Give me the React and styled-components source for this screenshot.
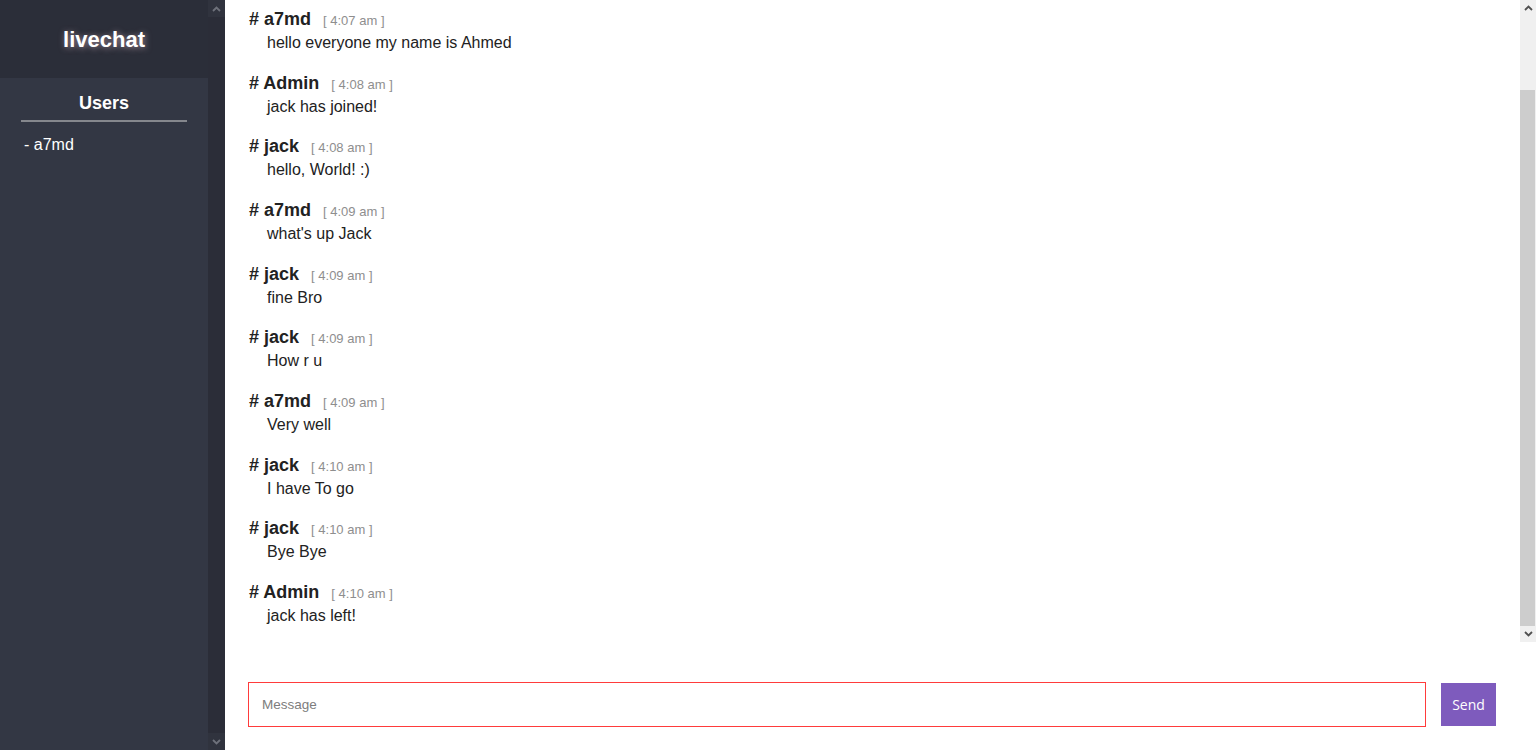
import React from "react";
import styled, { createGlobalStyle } from "styled-components";

const GlobalStyle = createGlobalStyle`
  html, body { margin: 0; padding: 0; height: 100%; overflow: hidden; }
  body { font-family: "Liberation Sans", Arial, sans-serif; background: #fff; }
  #root { height: 100%; }
  * { box-sizing: border-box; }
`;

const Page = styled.div`
  display: flex;
  height: 100vh;
  width: 100%;
`;

const Sidebar = styled.aside`
  width: 208px;
  flex-shrink: 0;
  background: #333744;
  display: flex;
  flex-direction: column;
  color: #fff;
`;

const Brand = styled.div`
  height: 78px;
  background: #2b2e39;
  display: flex;
  align-items: center;
  justify-content: center;
`;

const BrandTitle = styled.h1`
  margin: 0;
  font-size: 22px;
  font-weight: bold;
  color: #fff;
  text-shadow: 1px 1px 6px rgba(255, 215, 230, 0.55);
  line-height: 26px;
  transform: translateY(1px);
`;

const UsersTitle = styled.h3`
  margin: 0 21px;
  padding: 14px 0 6px;
  line-height: 22px;
  font-size: 18px;
  font-weight: bold;
  text-align: center;
  border-bottom: 2px solid #85878d;
`;

const UserList = styled.ul`
  list-style: none;
  margin: 14px 0 0;
  padding: 0 0 0 24px;
`;

const UserItem = styled.li`
  font-size: 16px;
  line-height: 18px;
  color: #fff;
`;

const ScrollTrack = styled.div`
  width: ${(p) => p.$w}px;
  flex-shrink: 0;
  height: 100%;
  display: flex;
  flex-direction: column;
  background: ${(p) => (p.$dark ? "#2b2d38" : "#f0f0f0")};
`;

const ScrollButton = styled.div`
  height: ${(p) => p.$size}px;
  flex-shrink: 0;
  display: flex;
  align-items: center;
  justify-content: center;
  background: ${(p) => (p.$dark ? "#30333e" : "#f0f0f0")};
  color: ${(p) => (p.$dark ? "#6e717b" : "#505050")};
`;

const ScrollArea = styled.div`
  flex: 1;
  display: flex;
  flex-direction: column;
`;

const ScrollGap = styled.div`
  height: ${(p) => p.$h}px;
  flex-shrink: 0;
`;

const Thumb = styled.div`
  flex: 1;
  margin: 0 1px 0 0;
  background: #cdcdcd;
`;

const Chevron = ({ up }) => (
  <svg width="9" height="6" viewBox="0 0 9 6">
    <path
      d={up ? "M1 5 L4.5 1.5 L8 5" : "M1 1 L4.5 4.5 L8 1"}
      fill="none"
      stroke="currentColor"
      strokeWidth="1.8"
    />
  </svg>
);

const Main = styled.main`
  flex: 1;
  display: flex;
  flex-direction: column;
  min-width: 0;
`;

const ChatRow = styled.div`
  height: 642px;
  display: flex;
  flex-shrink: 0;
`;

const Messages = styled.div`
  flex: 1;
  padding: 7px 24px 0 24px;
  overflow: hidden;
`;

const Message = styled.div`
  margin-bottom: 15.67px;
  color: #222;
`;

const MsgHead = styled.div`
  display: flex;
  align-items: baseline;
  height: 24px;
  line-height: 24px;
  overflow: visible;
`;

const Name = styled.span`
  font-size: 18px;
  font-weight: bold;
  color: #222;
  line-height: 24px;
`;

const Time = styled.span`
  font-size: 13px;
  color: #8e8e8e;
  margin-left: 12px;
  line-height: 24px;
`;

const MsgText = styled.div`
  font-size: 16px;
  line-height: 24px;
  height: 24px;
  padding-left: 18px;
  color: #222;
`;

const Form = styled.form`
  display: flex;
  align-items: stretch;
  padding: 40px 40px 23px 23px;
  height: 108px;
`;

const Input = styled.input`
  flex: 1;
  height: 45px;
  border: 1px solid #ff3b3b;
  padding: 0 13px;
  font-family: "Liberation Sans", Arial, sans-serif;
  font-size: 13.5px;
  outline: none;
  &::placeholder { color: #7d7d7d; }
`;

const SendButton = styled.button`
  margin: 1px 0 0 15px;
  width: 55px;
  height: 43px;
  background: #7e5bbd;
  color: #fff;
  border: none;
  font-family: "Open Sans", "Liberation Sans", sans-serif;
  font-size: 14px;
  padding: 0;
`;

const messages = [
  ["a7md", "4:07 am", "hello everyone my name is Ahmed"],
  ["Admin", "4:08 am", "jack has joined!"],
  ["jack", "4:08 am", "hello, World! :)"],
  ["a7md", "4:09 am", "what's up Jack"],
  ["jack", "4:09 am", "fine Bro"],
  ["jack", "4:09 am", "How r u"],
  ["a7md", "4:09 am", "Very well"],
  ["jack", "4:10 am", "I have To go"],
  ["jack", "4:10 am", "Bye Bye"],
  ["Admin", "4:10 am", "jack has left!"],
];

export default function App() {
  return (
    <>
      <GlobalStyle />
      <Page>
        <Sidebar>
          <Brand>
            <BrandTitle>livechat</BrandTitle>
          </Brand>
          <UsersTitle>Users</UsersTitle>
          <UserList>
            <UserItem>- a7md</UserItem>
          </UserList>
        </Sidebar>
        <ScrollTrack $w={17} $dark>
          <ScrollButton $size={17} $dark>
            <Chevron up />
          </ScrollButton>
          <ScrollArea />
          <ScrollButton $size={17} $dark>
            <Chevron />
          </ScrollButton>
        </ScrollTrack>
        <Main>
          <ChatRow>
            <Messages>
              {messages.map(([name, time, text], i) => (
                <Message key={i}>
                  <MsgHead>
                    <Name># {name}</Name>
                    <Time>[ {time} ]</Time>
                  </MsgHead>
                  <MsgText>{text}</MsgText>
                </Message>
              ))}
            </Messages>
            <ScrollTrack $w={16}>
              <ScrollButton $size={16}>
                <Chevron up />
              </ScrollButton>
              <ScrollArea>
                <ScrollGap $h={74} />
                <Thumb />
              </ScrollArea>
              <ScrollButton $size={16}>
                <Chevron />
              </ScrollButton>
            </ScrollTrack>
          </ChatRow>
          <Form onSubmit={(e) => e.preventDefault()}>
            <Input placeholder="Message" />
            <SendButton type="submit">Send</SendButton>
          </Form>
        </Main>
      </Page>
    </>
  );
}
